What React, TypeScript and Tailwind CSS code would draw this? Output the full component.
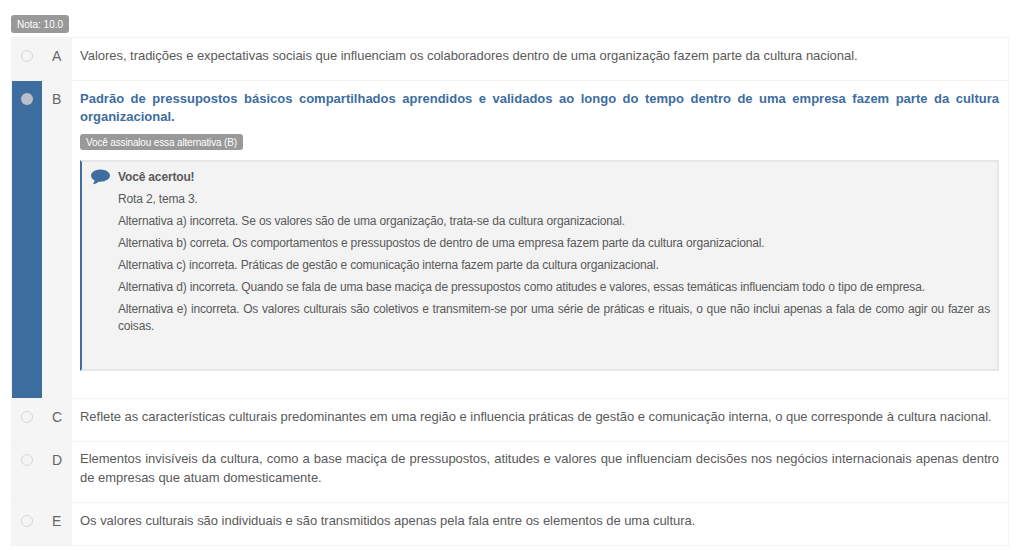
const alternativas = {
  a: 'Valores, tradições e expectativas sociais que influenciam os colaboradores dentro de uma organização fazem parte da cultura nacional.',
  b: 'Padrão de pressupostos básicos compartilhados aprendidos e validados ao longo do tempo dentro de uma empresa fazem parte da cultura organizacional.',
  c: 'Reflete as características culturais predominantes em uma região e influencia práticas de gestão e comunicação interna, o que corresponde à cultura nacional.',
  d: 'Elementos invisíveis da cultura, como a base maciça de pressupostos, atitudes e valores que influenciam decisões nos negócios internacionais apenas dentro de empresas que atuam domesticamente.',
  e: 'Os valores culturais são individuais e são transmitidos apenas pela fala entre os elementos de uma cultura.',
}

const feedback = [
  'Rota 2, tema 3.',
  'Alternativa a) incorreta. Se os valores são de uma organização, trata-se da cultura organizacional.',
  'Alternativa b) correta. Os comportamentos e pressupostos de dentro de uma empresa fazem parte da cultura organizacional.',
  'Alternativa c) incorreta. Práticas de gestão e comunicação interna fazem parte da cultura organizacional.',
  'Alternativa d) incorreta. Quando se fala de uma base maciça de pressupostos como atitudes e valores, essas temáticas influenciam todo o tipo de empresa.',
  'Alternativa e) incorreta. Os valores culturais são coletivos e transmitem-se por uma série de práticas e rituais, o que não inclui apenas a fala de como agir ou fazer as coisas.',
]

function Radio({ checked }: { checked?: boolean }) {
  if (checked) return <span className="block h-[12px] w-[12px] rounded-full bg-[#b9c0c9]" />
  return <span className="block h-[12px] w-[12px] rounded-full border border-[#d6d6d6] bg-[#f5f5f5]" />
}

function Row({ letter, text, h, pt }: { letter: string; text: string; h: string; pt: string }) {
  return (
    <div className={`flex ${h} border-t border-[#f3f3f3]`}>
      <div className="flex w-[60px] shrink-0 bg-[#f5f5f5]">
        <div className="flex w-[30px] shrink-0 justify-center pt-[12px]">
          <Radio />
        </div>
        <div className="flex-1 pl-[10px] pt-[8px] text-[14px] leading-[20px] text-[#666]">{letter}</div>
      </div>
      <p className={`flex-1 pl-[8px] pr-[9px] ${pt} text-justify text-[13px] leading-[19px] tracking-[-0.03px] text-[#5a5a5a]`}>{text}</p>
    </div>
  )
}

export default function App() {
  return (
    <div className="h-[550px] w-[1031px] overflow-hidden bg-white pl-[11px] pt-[15px] font-['Liberation_Sans',Arial,sans-serif]">
      <div className="flex h-[18px] w-[58px] items-center justify-center rounded-[3px] bg-[#999] text-[10px] text-white">Nota: 10.0</div>

      <div className="mt-[4px] w-[998px] border-x border-b border-[#f3f3f3]">
        <Row letter="A" text={alternativas.a} h="h-[43px]" pt="pt-[8px]" />

        {/* Alternativa assinalada */}
        <div className="flex h-[318px] border-t border-[#f3f3f3]">
          <div className="flex w-[60px] shrink-0 bg-[#f5f5f5]">
            <div className="flex w-[30px] shrink-0 justify-center bg-[#3e6d9f] pt-[12px]">
              <Radio checked />
            </div>
            <div className="flex-1 pl-[10px] pt-[8px] text-[14px] leading-[20px] text-[#666]">B</div>
          </div>
          <div className="flex-1 pl-[8px] pr-[9px] pt-[9px]">
            <p className="text-justify text-[13px] font-bold leading-[18px] text-[#3e6d9f]">{alternativas.b}</p>
            <div className="mt-[8px] flex h-[16px] w-[163px] items-center justify-center whitespace-nowrap rounded-[3px] bg-[#999] text-[10px] tracking-[-0.15px] text-white">
              Você assinalou essa alternativa (B)
            </div>
            <div className="mt-[10px] flex h-[211px] w-[919px] border-y-2 border-r-2 border-l-2 border-y-[#e6e6e6] border-r-[#e6e6e6] border-l-[#3e6d9f] bg-[#f3f3f3] pl-[9px] pr-[7px] pt-[7px]">
              <svg viewBox="0 0 20 16" className="h-[16px] w-[19px] shrink-0 fill-[#3e6d9f]">
                <path d="M10 0C4.5 0 0 2.9 0 6.5c0 2.1 1.500 3.900 3.800 5.100-.2 1.500-1 2.900-1.900 3.900 2.200-.2 4.400-1.200 5.900-2.600.7.1 1.400.1 2.200.1 5.500 0 10-2.900 10-6.500S15.500 0 10 0z" />
              </svg>
              <div className="ml-[8px] flex-1 text-justify text-[12px] leading-[17px] tracking-[-0.155px] text-[#5a5a5a]">
                <div className="mb-[5px] font-bold">Você acertou!</div>
                {feedback.map((line) => (
                  <p key={line} className="mb-[5px]">{line}</p>
                ))}
              </div>
            </div>
          </div>
        </div>

        <Row letter="C" text={alternativas.c} h="h-[43px]" pt="pt-[8px]" />
        <Row letter="D" text={alternativas.d} h="h-[61px]" pt="pt-[7px]" />
        <Row letter="E" text={alternativas.e} h="h-[43px]" pt="pt-[8px]" />
      </div>
    </div>
  )
}
